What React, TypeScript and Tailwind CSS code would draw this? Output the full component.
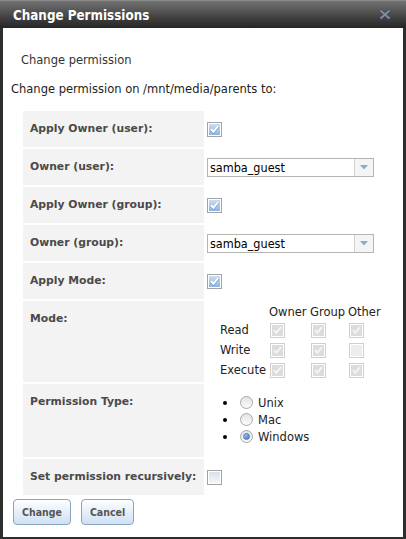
import React from "react";

const BODY = { fontFamily: '"DejaVu Sans", Verdana, sans-serif' };
const COND = { fontFamily: '"DejaVu Sans Condensed", "DejaVu Sans", Tahoma, sans-serif' };

function Check({ checked, disabled }: { checked: boolean; disabled?: boolean }) {
  const frame = disabled ? "border-[#cfcfcf]" : "border-[#a3a3a3]";
  const fill = disabled
    ? checked
      ? "bg-[#dcdcdc]"
      : "bg-[#ededed]"
    : checked
      ? "bg-gradient-to-b from-[#c9dcf1] to-[#8fb5e0]"
      : "bg-gradient-to-b from-[#d9e1ec] to-[#f4f7fb]";
  return (
    <span className={`inline-flex w-[15px] h-[15px] border ${frame} bg-white p-[1px] align-middle`}>
      <span className={`flex-1 flex items-center justify-center ${fill}`}>
        {checked && (
          <svg width="11" height="11" viewBox="0 0 11 11">
            {!disabled && (
              <path d="M2 5.8 L4.4 8.2 L9 2.6" fill="none" stroke="#6f97c6" strokeWidth="2.6" />
            )}
            <path
              d="M2 5.3 L4.4 7.7 L9 2.1"
              fill="none"
              stroke={disabled ? "#f4f4f4" : "#ffffff"}
              strokeWidth="2"
            />
          </svg>
        )}
      </span>
    </span>
  );
}

function Radio({ on }: { on?: boolean }) {
  return (
    <span className="inline-flex w-[13px] h-[13px] rounded-full border border-[#a8a8a8] bg-gradient-to-b from-[#e4e4e4] to-[#fbfbfb] items-center justify-center">
      {on && (
        <span className="w-[7px] h-[7px] rounded-full bg-gradient-to-br from-[#a9c8ea] to-[#3f7cc0] border border-[#4a7eb5]" />
      )}
    </span>
  );
}

function Select({ value }: { value: string }) {
  return (
    <div className="flex w-[167px] h-[19px] border border-[#b4b4b4] bg-white" style={COND}>
      <div className="flex-1 pl-[2px] text-[12.5px] leading-[17px] text-black">{value}</div>
      <div className="w-[19px] border-l border-[#d2d2d2] bg-[#f4f4f4] flex items-center justify-center">
        <svg width="8" height="5" viewBox="0 0 8 5">
          <path d="M0 0 H8 L4 4.5 Z" fill="#93a8c4" />
        </svg>
      </div>
    </div>
  );
}

function Label({ children, top }: { children: React.ReactNode; top?: boolean }) {
  return (
    <td
      className={`w-[181px] min-w-[181px] max-w-[181px] bg-[#f3f3f3] pl-[7px] pr-[1px] py-[10px] text-[10.8px] leading-[16px] font-bold text-[#4a4a4a] whitespace-nowrap ${
        top ? "align-top" : "align-middle"
      }`}
    >
      {children}
    </td>
  );
}

const modeRows: { name: string; vals: boolean[] }[] = [
  { name: "Read", vals: [true, true, true] },
  { name: "Write", vals: [true, true, false] },
  { name: "Execute", vals: [true, true, true] },
];

export default function App() {
  return (
    <div className="w-[406px] h-[539px] flex flex-col bg-[#2e2e2e]" style={BODY}>
      {/* title bar */}
      <div className="h-[28px] shrink-0 flex items-center justify-between pl-[13px] pr-[15px] bg-gradient-to-b from-[#737373] via-[#4a4a4a] to-[#252525] border-t border-[#8a8a8a]">
        <span className="text-white font-bold text-[13.3px] leading-none pt-[2px]" style={COND}>
          Change Permissions
        </span>
        <svg width="12" height="11" viewBox="0 0 12 11">
          <path d="M1.5 1.5 L10.5 9.5 M10.5 1.5 L1.5 9.5" stroke="#3f4650" strokeWidth="3.6" />
          <path d="M1.5 1.5 L10.5 9.5 M10.5 1.5 L1.5 9.5" stroke="#7d8ea3" strokeWidth="1.9" />
        </svg>
      </div>

      <div className="flex-1 mx-[3px] mb-[2px] bg-white text-[11.5px] leading-[16px] text-[#333]">
        <div className="pl-[18px] mt-[24px]">Change permission</div>
        <div className="pl-[8px] mt-[13px] text-[#222]">Change permission on /mnt/media/parents to:</div>

        <table className="ml-[18px] mt-[12px] border-separate border-spacing-[2px]">
          <tbody>
            <tr>
              <Label>Apply Owner (user):</Label>
              <td className="pl-[1px] align-middle">
                <Check checked />
              </td>
            </tr>
            <tr>
              <Label>Owner (user):</Label>
              <td className="pl-[1px] align-middle">
                <Select value="samba_guest" />
              </td>
            </tr>
            <tr>
              <Label>Apply Owner (group):</Label>
              <td className="pl-[1px] align-middle">
                <Check checked />
              </td>
            </tr>
            <tr>
              <Label>Owner (group):</Label>
              <td className="pl-[1px] align-middle">
                <Select value="samba_guest" />
              </td>
            </tr>
            <tr>
              <Label>Apply Mode:</Label>
              <td className="pl-[1px] align-middle">
                <Check checked />
              </td>
            </tr>
            <tr>
              <Label top>Mode:</Label>
              <td className="align-top pt-[2px] pb-[2px]">
                <table className="ml-[12px] border-collapse text-[#222]">
                  <tbody>
                    <tr className="h-[17px]">
                      <td className="w-[51px]" />
                      <td className="w-[41px]">Owner</td>
                      <td className="w-[38px]">Group</td>
                      <td>Other</td>
                    </tr>
                    {modeRows.map((r) => (
                      <tr key={r.name} className="h-[20px]">
                        <td className="pl-[2px]">{r.name}</td>
                        {r.vals.map((v, i) => (
                          <td key={i} className="pl-[1px] align-middle">
                            <Check checked={v} disabled />
                          </td>
                        ))}
                      </tr>
                    ))}
                  </tbody>
                </table>
              </td>
            </tr>
            <tr>
              <Label top>Permission Type:</Label>
              <td className="align-top pt-[10px] pb-[12px]">
                <ul className="text-[#222]">
                  {[
                    { t: "Unix", on: false },
                    { t: "Mac", on: false },
                    { t: "Windows", on: true },
                  ].map((o) => (
                    <li key={o.t} className="flex items-center h-[17px] pl-[17px]">
                      <span className="w-[4px] h-[4px] rounded-full bg-black mr-[13px]" />
                      <Radio on={o.on} />
                      <span className="ml-[5px] text-[11.5px]">{o.t}</span>
                    </li>
                  ))}
                </ul>
              </td>
            </tr>
            <tr>
              <Label>Set permission recursively:</Label>
              <td className="pl-[1px] align-middle">
                <Check checked={false} />
              </td>
            </tr>
          </tbody>
        </table>

        <div className="flex gap-[10px] ml-[10px] mt-[2px]" style={COND}>
          {["Change", "Cancel"].map((b) => (
            <button
              key={b}
              className="h-[26px] px-[8px] rounded-[4px] border border-[#8ba4c2] bg-gradient-to-b from-[#fdfeff] to-[#cfe0f4] text-[10.5px] font-bold text-[#555]"
            >
              {b}
            </button>
          ))}
        </div>
      </div>
    </div>
  );
}
